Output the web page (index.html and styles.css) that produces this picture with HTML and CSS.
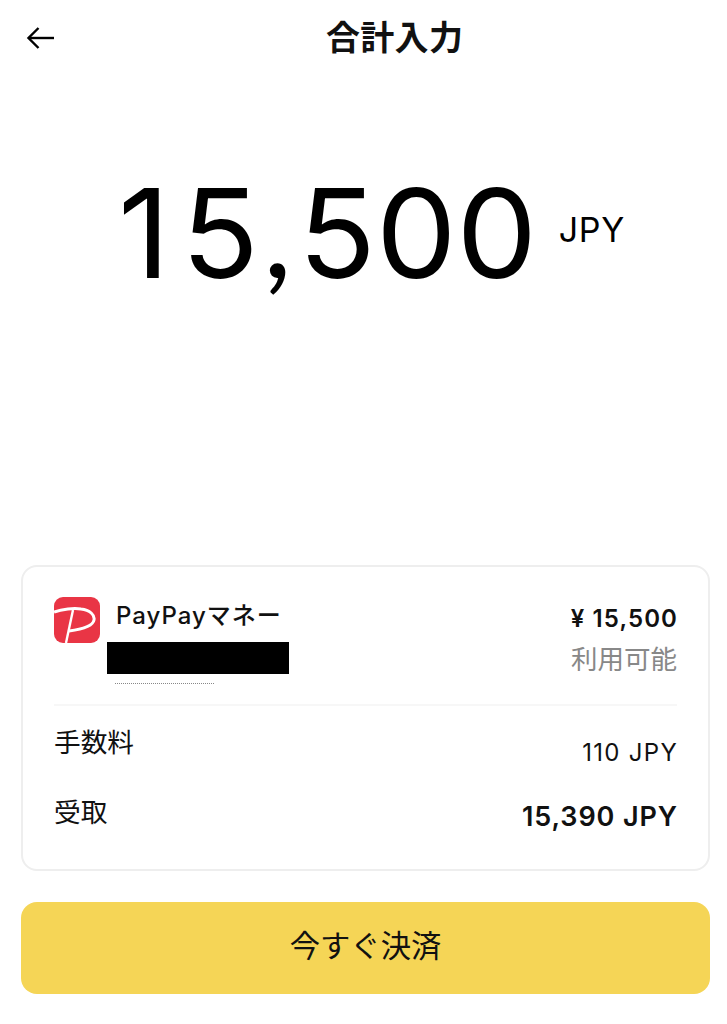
FILE: index.html
```html
<!doctype html>
<html lang="ja">
    <head>
        <meta charset="utf-8"/>
        <title>合計入力</title>
        <link rel="stylesheet" href="styles.css">
    </head>
    <body>
        <main class="page">
            <header class="topbar">
                <svg class="back" width="30" height="24" viewBox="0 0 30 24" fill="none" stroke="#000" stroke-width="2.4">
                    <path d="M28 12H3"/>
                    <path d="M12.5 2L2.5 12L12.5 22"/>
                </svg>
                <h1 class="title">合計入力</h1>
            </header>
            <section class="hero">
                <span class="amount"><span class="one">1</span>5<span class="comma">,</span>500</span>
                <span class="currency">JPY</span>
            </section>
            <section class="card">
                <div class="method">
                    <svg class="logo" width="46" height="46" viewBox="0 0 46 46">
                        <rect width="46" height="46" rx="9" fill="#e93545"/>
                        <path d="M0 15C8 12 20 11 27 12C36 13 41 18 40 23C39 29 30 32 15 34" fill="none" stroke="#fff" stroke-width="3"/>
                        <path d="M19 13L12 46" fill="none" stroke="#fff" stroke-width="2.400"/>
                    </svg>
                    <div class="method-info">
                        <div class="method-name">PayPayマネー</div>
                        <div class="redacted"></div>
                        <div class="dots"></div>
                    </div>
                    <div class="balance">
                        <div class="balance-value">¥ 15,500</div>
                        <div class="balance-note">利用可能</div>
                    </div>
                </div>
                <div class="row row-fee">
                    <span class="row-label">手数料</span>
                    <span class="fee-value">110 JPY</span>
                </div>
                <div class="row row-receive">
                    <span class="row-label">受取</span>
                    <span class="receive-value">15,390 JPY</span>
                </div>
            </section>
            <button class="pay" type="button">今すぐ決済</button>
        </main>
    </body>
</html>
```

FILE: styles.css
```css
body {
    background-color: #fff;
    margin: 0;
    color: #111;
    font-family: Inter, "Noto Sans CJK JP", sans-serif;
}

.page {
    height: 1024px;
    display: flex;
    flex-direction: column;
    padding: 0 17px 30px 21px;
    box-sizing: border-box;
}

.topbar {
    height: 76px;
    display: flex;
    align-items: center;
    padding-left: 5px;
}

.back {
    flex: none;
}

.title {
    margin: 0 0 0 270px;
    font-size: 34px;
    font-weight: 700;
    letter-spacing: 0.300px;
    line-height: 76px;
}

.hero {
    flex: 1;
    display: flex;
    align-items: flex-start;
    padding: 78px 0 0 97px;
    color: #000;
}

.amount {
    display: inline-block;
    font-size: 124px;
    line-height: 152px;
    font-weight: 400;
    transform: scaleX(1.03);
    transform-origin: left;
}

.one {
    margin-right: 11px;
}

.comma {
    margin: 0 6px 0 4px;
    font-family: Lato, sans-serif;
}

.currency {
    margin: 52px 0 0 34px;
    font-size: 34px;
    line-height: 48px;
    letter-spacing: 0.600px;
}

.card {
    height: 306px;
    box-sizing: border-box;
    border: 2px solid #eeeeee;
    border-radius: 16px;
    padding: 30px 31px 0;
}

.method {
    display: flex;
    height: 107px;
    border-bottom: 2px solid #f7f7f7;
}

.logo {
    flex: none;
}

.method-info {
    margin-left: 7px;
}

.method-name {
    margin-left: 9px;
    font-size: 24px;
    line-height: 38px;
    font-weight: 500;
    letter-spacing: 1px;
}

.redacted {
    width: 182px;
    height: 32px;
    margin-top: 7px;
    background-color: #000;
}

.dots {
    width: 99px;
    margin: 9px 0 0 8px;
    border-top: 1px dotted #888;
}

.balance {
    margin-left: auto;
    text-align: right;
}

.balance-value {
    margin-top: 6px;
    margin-right: -1px;
    font-size: 24px;
    line-height: 32px;
    font-weight: 600;
    letter-spacing: 1.100px;
}

.balance-note {
    margin-top: 6px;
    font-size: 26.500px;
    line-height: 36px;
    color: #888;
}

.row {
    display: flex;
    justify-content: space-between;
}

.row-fee {
    margin-top: 18px;
}

.row-receive {
    margin-top: 25px;
}

.row-label {
    font-size: 26.700px;
    line-height: 36px;
}

.fee-value {
    margin-top: 13px;
    margin-right: -1px;
    font-size: 24px;
    line-height: 32px;
    letter-spacing: 1.300px;
}

.receive-value {
    margin-top: 5px;
    margin-right: -1px;
    font-size: 27px;
    line-height: 36px;
    font-weight: 600;
    letter-spacing: 0.900px;
}

.pay {
    height: 92px;
    margin-top: 31px;
    padding-bottom: 9px;
    flex: none;
    border: 0;
    border-radius: 16px;
    background-color: #f5d556;
    color: #111;
    font-family: inherit;
    font-size: 30.300px;
}
```
